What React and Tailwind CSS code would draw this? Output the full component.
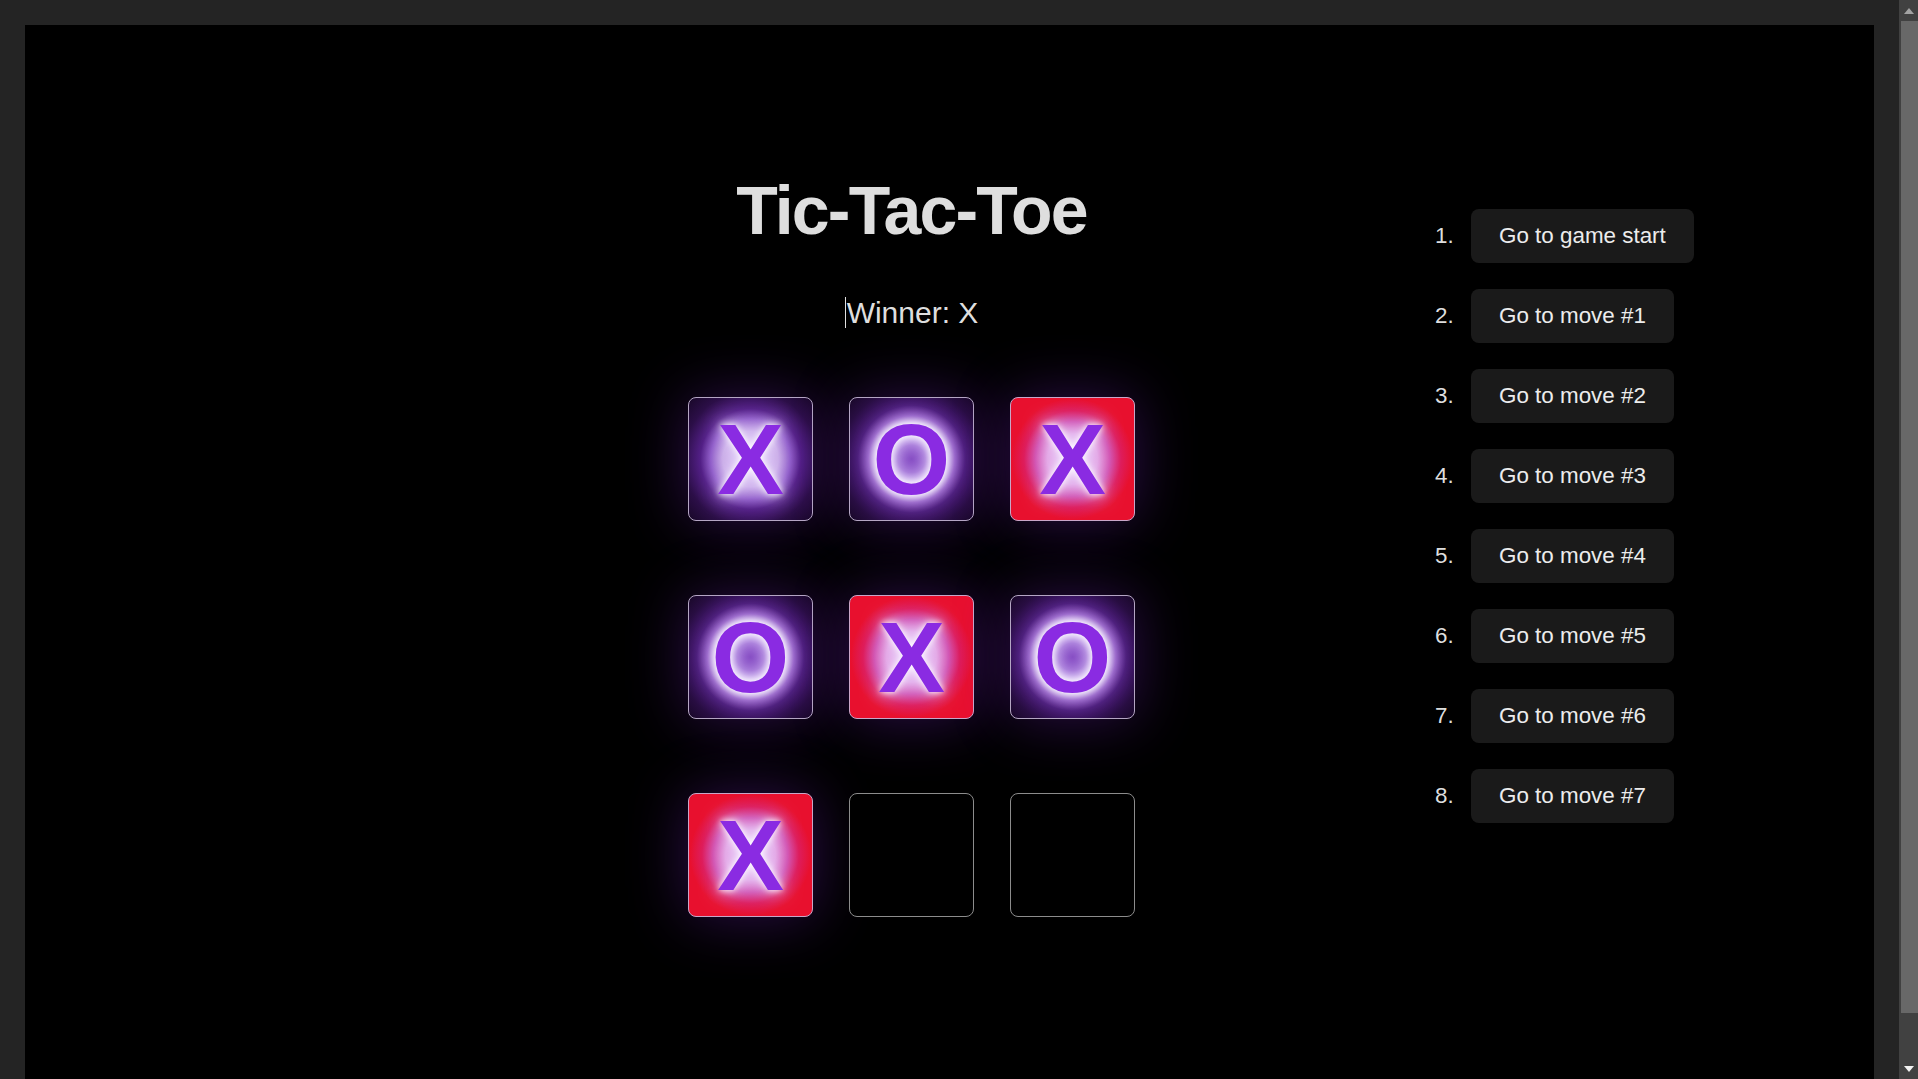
import { useState } from 'react';

const FONT = "font-['Liberation_Sans',Arial,sans-serif]";

// winning line is the anti-diagonal
const WIN = [2, 4, 6];

// glow behind the mark, one per mark / state
const GLOW = {
  X: 'bg-[#0d0416] bg-[radial-gradient(circle,rgba(240,222,255,0.95)_0%,rgba(222,192,252,0.9)_32%,rgba(172,112,240,0.82)_46%,rgba(118,45,192,0.66)_58%,rgba(66,22,108,0.58)_78%,rgba(32,10,52,0.6)_100%)]',
  O: 'bg-[#0d0416] bg-[radial-gradient(circle,rgba(140,70,215,0.85)_0%,rgba(170,112,235,0.85)_16%,rgba(218,190,252,0.92)_26%,rgba(228,205,255,0.92)_40%,rgba(165,96,230,0.8)_50%,rgba(106,38,176,0.64)_62%,rgba(60,20,98,0.58)_82%,rgba(32,10,52,0.6)_100%)]',
  win: 'bg-[#e8102e] bg-[radial-gradient(circle,rgba(242,214,252,0.95)_0%,rgba(230,180,244,0.9)_29%,rgba(206,98,206,0.82)_43%,rgba(212,40,134,0.52)_56%,rgba(232,16,46,0)_70%)]',
};

function Square({ value, winning }) {
  const base =
    'flex h-[124px] w-[125px] items-center justify-center rounded-lg border text-[100px] font-bold leading-none';

  if (!value) {
    return <button className={`${base} border-[#8c8c8c] bg-black`} />;
  }

  return (
    <button
      className={`${base} text-[#8a2be2] shadow-[0_0_60px_rgba(138,43,226,0.33)] [text-shadow:0_0_6px_#fff,0_0_14px_rgba(255,255,255,0.7),0_0_24px_#d8b8ff] ${
        winning ? `border-[#c9a6c8] ${GLOW.win}` : `border-[#b5a6c4] ${GLOW[value]}`
      }`}
    >
      {value}
    </button>
  );
}

function Scrollbar() {
  return (
    <div className="flex w-[19px] shrink-0 flex-col bg-[#414141]">
      <div className="flex h-[21px] items-center justify-center pt-px">
        <svg width="10" height="6" viewBox="0 0 10 6">
          <path d="M5 0 L10 6 L0 6 Z" fill="#a3a3a3" />
        </svg>
      </div>
      <div className="ml-[2px] h-[992px] bg-[#686868]" />
      <div className="flex-1" />
      <div className="flex h-[21px] items-start justify-center pt-[8px]">
        <svg width="10" height="6" viewBox="0 0 10 6">
          <path d="M0 0 L10 0 L5 6 Z" fill="#f2f2f2" />
        </svg>
      </div>
    </div>
  );
}

export default function App() {
  const [squares] = useState(['X', 'O', 'X', 'O', 'X', 'O', 'X', null, null]);
  const moves = ['Go to game start', ...Array.from({ length: 7 }, (_, i) => `Go to move #${i + 1}`)];

  return (
    <div className={`flex h-[1079px] w-full overflow-hidden bg-[#242424] ${FONT}`}>
      <div className="flex flex-1 flex-col px-[25px] pt-[25px]">
        <div className="flex flex-1 bg-black pl-[663px]">
          {/* board column */}
          <div className="flex w-[447px] flex-col items-center pt-[151px]">
            <h1 className="text-[68px] font-bold leading-[68px] tracking-[-1.8px] text-[#dedede]">Tic-Tac-Toe</h1>
            <div className="mt-[53px] flex items-center text-[30px] leading-[31px] text-[#dedede]">
              <span className="mr-[1px] inline-block h-[31px] w-px bg-[#e0e0e0]" />
              Winner: X
            </div>
            <div className="mt-[69px] grid grid-cols-[repeat(3,125px)] gap-x-[36px] gap-y-[74px]">
              {squares.map((v, i) => (
                <Square key={i} value={v} winning={WIN.includes(i)} />
              ))}
            </div>
          </div>

          {/* history column */}
          <ol className="ml-[300px] flex flex-col gap-[26px] pt-[184px]">
            {moves.map((label, i) => (
              <li key={i} className="flex items-center text-[22.4px] text-[#dedede]">
                <span className="w-[36px]">{i + 1}.</span>
                <button className="h-[54px] rounded-lg bg-[#1a1a1a] px-[28px] text-[22.4px] leading-none text-[#ececec]">
                  {label}
                </button>
              </li>
            ))}
          </ol>
        </div>
      </div>
      <Scrollbar />
    </div>
  );
}
